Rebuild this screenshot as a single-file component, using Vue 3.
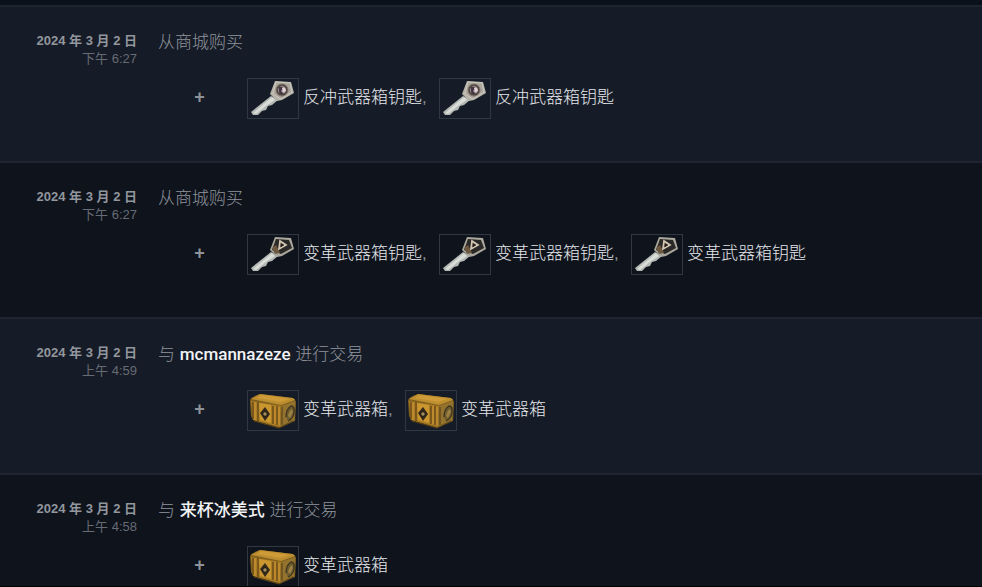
<template>
  <main class="history">
    <article v-for="row in rows" :key="row.id" class="history-row">
      <div class="row-date">
        <time class="row-day">2024 年 3 月 2 日</time>
        <span class="row-time">{{ row.time }}</span>
      </div>
      <div class="row-content">
        <p v-if="row.partner" class="row-event">
          与 <a href="#" class="partner">{{ row.partner }}</a> 进行交易
        </p>
        <p v-else class="row-event">从商城购买</p>
        <div class="row-items">
          <span class="plus">+</span>
          <ul class="item-list">
            <li v-for="n in row.count" :key="n" class="item">
              <a href="#" class="item-link">
                <span class="item-image">
                  <svg v-if="row.kind === 'case'" viewBox="0 0 50 39" aria-hidden="true">
                    <path d="M2 9 Q3 6 12 3 L44 7 Q48 8 48 12 L47 30 L31 37 L5 29 L3 25 Z" fill="#80601f" />
                    <path d="M3 8 L12 3 L45 7 L47 9 L33 14 Z" fill="#bd8e2f" />
                    <path d="M9 7 L14 4 L42 8 L32 11 Z" fill="#cd9b37" />
                    <path d="M3 10 L33 15 L32 36 L5 29 Z" fill="#a97b22" />
                    <path d="M33 15 L47 10 L46 29 L32 36 Z" fill="#94732e" />
                    <path d="M11 12 L23 14 L23 32 L12 29 Z" fill="#c9962f" />
                    <path d="M5 11 V28 M10 11 V30 M25 15 V33 M29 15 V34 M34 16 V34" stroke="#5f4318" stroke-width="1.2" fill="none" />
                    <path d="M7 11 V29 M27 15 V33 M31 16 V34" stroke="#cf9a37" fill="none" />
                    <path d="M17 16 L22 23 L17 30 L12 22 Z" fill="#33291a" />
                    <circle cx="17" cy="23" r="2.3" fill="#a58b58" stroke="#171713" />
                    <path d="M38 26 Q38 18 43 15 Q47 15 46 22 Q45 28 40 30" fill="#6d5b2d" stroke="#3d351f" stroke-width="1.3" />
                    <path d="M40 25 Q41 20 44 18 L45 21 L42 27 Z" fill="#9b8044" />
                    <path d="M6 30 L31 37 L45 30" fill="none" stroke="#594217" stroke-width="1" />
                  </svg>
                  <svg v-else viewBox="0 0 50 39" aria-hidden="true">
                    <path d="M23 17 L30 21 L24 26 L20 27 L18 31 L14 32 L10 36 L5 36 L3 33 Z" fill="#b3b8b5" />
                    <path d="M24 18 L5 34 L8 35 L18 27 L27 21 Z" fill="#d9dcd7" />
                    <path d="M27 2 L43 3 L46 14 L34 21 L29 22 L22 15 Z" :fill="row.kind === 'recoil' ? '#b7b3a9' : '#aaa79c'" />
                    <template v-if="row.kind === 'recoil'">
                      <path d="M28 3 L42 4 L44 13 L33 20 L25 15 Z" fill="#aaa69d" stroke="#cbc8be" />
                      <circle cx="34" cy="11" r="6" fill="#524843" stroke="#80736a" />
                      <circle cx="34" cy="11" r="3.8" fill="#b7a5a8" />
                      <path d="M31 8 Q35 7 35 10 L33 12 L36 15 Q31 16 31 12 Z" fill="#423643" />
                      <path d="M34 9 L37 9 L38 12 L35 13 Z" fill="#e1d4d9" />
                    </template>
                    <template v-else>
                      <path d="M28 4 L41 5 L44 13 L33 19 L24 15 Z" fill="#2b2927" />
                      <path d="M24 13 L28 10 L32 18 L27 19 Z" fill="#6c5940" />
                      <path d="M32 6 L38 10 L31 14 Z" fill="#40342a" stroke="#d2c9b5" stroke-width="1.7" />
                      <path d="M33 9 L36 10 L33 12 Z" fill="#1e1d1c" />
                    </template>
                  </svg>
                </span>
                <span class="item-name">{{ row.item }}</span>
              </a><span v-if="n < row.count" class="comma">,</span>
            </li>
          </ul>
        </div>
      </div>
    </article>
  </main>
</template>

<script setup>
const rows = [
  { id: 1, time: "下午 6:27", kind: "recoil", item: "反冲武器箱钥匙", count: 2 },
  { id: 2, time: "下午 6:27", kind: "revolution", item: "变革武器箱钥匙", count: 3 },
  { id: 3, time: "上午 4:59", partner: "mcmannazeze", kind: "case", item: "变革武器箱", count: 2 },
  { id: 4, time: "上午 4:58", partner: "来杯冰美式", kind: "case", item: "变革武器箱", count: 1 },
];
</script>

<style>
body {
  margin: 0;
  background: #0e131c;
}
</style>

<style scoped>
.history {
  box-sizing: border-box;
  height: 100vh;
  padding-top: 5px;
  overflow: hidden;
  border-bottom: 1px solid #000;
  background: #0b111a;
  color: #8f949c;
  font-family: "Liberation Sans", "Noto Sans CJK SC", sans-serif;
}
.history-row {
  box-sizing: border-box;
  display: grid;
  grid-template-columns: 137px minmax(0, 1fr);
  column-gap: 21px;
  min-height: 156px;
  padding-top: 24px;
  border-top: 2px solid #1e2530;
  background: #0e131c;
}
.history-row:nth-child(odd) {
  background: #161c27;
}
.row-date {
  display: flex;
  flex-direction: column;
  padding-top: 1px;
  text-align: right;
  font-size: 13px;
  line-height: 18px;
  white-space: nowrap;
}
.row-day {
  color: #92969d;
  font-weight: bold;
}
.row-time {
  color: #666b74;
}
.row-event {
  margin: 0;
  font-size: 17px;
  font-weight: 300;
  line-height: 24px;
}
.partner {
  color: #f2f3f5;
  font-family: Roboto, "Noto Sans CJK SC", sans-serif;
  font-weight: 500;
  line-height: 20px;
  text-decoration: none;
}
.row-items {
  display: flex;
  align-items: center;
  margin-top: 23px;
}
.plus {
  width: 83px;
  flex-shrink: 0;
  padding-bottom: 2px;
  text-align: center;
  font-size: 18px;
  font-weight: bold;
  color: #8e939a;
}
.item-list {
  display: flex;
  flex-wrap: wrap;
  gap: 12px;
  margin: 0 0 0 6px;
  padding: 0;
  list-style: none;
}
.item {
  display: flex;
  align-items: center;
  font-size: 17px;
  line-height: 24px;
  white-space: nowrap;
}
.item-link {
  display: flex;
  align-items: center;
  gap: 4px;
  color: #e4e6ea;
  font-weight: 300;
  text-decoration: none;
}
.item-image {
  box-sizing: border-box;
  width: 52px;
  height: 41px;
  border: 1px solid #303843;
}
.item-image svg {
  display: block;
  width: 100%;
  height: 100%;
}
.item-name,
.comma {
  padding-bottom: 2px;
}
.comma {
  width: 5px;
}
</style>
